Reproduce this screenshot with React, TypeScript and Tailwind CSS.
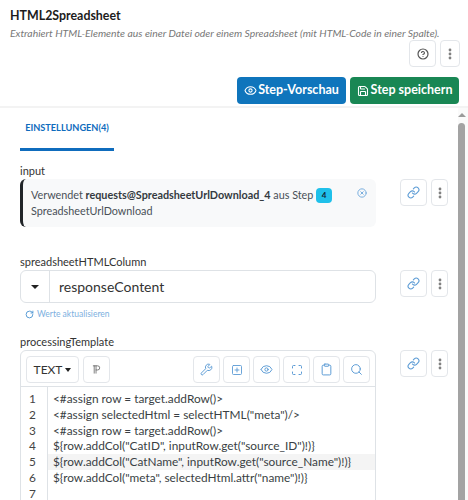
import React from "react";
import { Link, Wrench, Eye, Save, Search, Clipboard, Maximize, SquarePlus, CircleHelp, CircleX, RotateCw, Pilcrow } from "lucide-react";

const Kebab = () => (
  <svg width="4" height="12" viewBox="0 0 4 12" fill="#808080">
    <circle cx="2" cy="2" r="1.4" />
    <circle cx="2" cy="6" r="1.4" />
    <circle cx="2" cy="10" r="1.4" />
  </svg>
);

const Side = () => (
  <div className="flex gap-[4px] ml-[24px] shrink-0">
    <button className="w-[27px] h-[27px] border border-[#e3e6ea] rounded-[4px] flex items-center justify-center">
      <Link size={13} strokeWidth={2} className="text-[#5b9bd5]" />
    </button>
    <button className="w-[17px] h-[27px] border border-[#e3e6ea] rounded-[4px] flex items-center justify-center">
      <Kebab />
    </button>
  </div>
);

const Tool = ({ children }: { children: React.ReactNode }) => (
  <button className="w-[27px] h-[27px] border border-[#e3e6ea] rounded-[4px] flex items-center justify-center text-[#5b9bd5]">
    {children}
  </button>
);

const lines = [
  '<#assign row = target.addRow()>',
  '<#assign selectedHtml = selectHTML("meta")/>',
  '<#assign row = target.addRow()>',
  '${row.addCol("CatID", inputRow.get("source_ID")!)}',
  '${row.addCol("CatName", inputRow.get("source_Name")!)}',
  '${row.addCol("meta", selectedHtml.attr("name")!)}',
  '',
];

export default function App() {
  return (
    <div className="w-[468px] h-[500px] overflow-hidden bg-white flex flex-col text-[#212529] font-['Lato',sans-serif]">
      <header className="h-[108px] shrink-0 pl-[10px] pr-[8px] pt-[7px] border-b-2 border-[#f3f3f3]">
        <h1 className="text-[12.4px] leading-[17px] font-bold text-[#1c1c1c]">HTML2Spreadsheet</h1>
        <p className="text-[10.4px] leading-[14px] mt-[2px] italic text-[#777] whitespace-nowrap">
          Extrahiert HTML-Elemente aus einer Datei oder einem Spreadsheet (mit HTML-Code in einer Spalte).
        </p>
        <div className="flex justify-end gap-[4px]">
          <button className="w-[27px] h-[27px] border border-[#e3e6ea] rounded-[4px] flex items-center justify-center">
            <CircleHelp size={12} strokeWidth={2.4} className="text-[#555]" />
          </button>
          <button className="w-[20px] h-[27px] border border-[#e3e6ea] rounded-[4px] flex items-center justify-center">
            <Kebab />
          </button>
        </div>
        <div className="flex justify-end gap-[4px] mt-[10px] pr-[1px] text-[12.5px] font-bold text-white">
          <button className="w-[109px] h-[27px] rounded-[4px] bg-[#0f75bc] flex items-center justify-center gap-[1px] whitespace-nowrap">
            <Eye size={13} strokeWidth={2} />
            Step-Vorschau
          </button>
          <button className="w-[109px] h-[27px] rounded-[4px] bg-[#198754] flex items-center justify-center gap-[2px] whitespace-nowrap">
            <Save size={12} strokeWidth={2.2} />
            Step speichern
          </button>
        </div>
      </header>

      <div className="flex flex-1 min-h-0">
        <main className="flex-1 min-w-0 pl-[20px] overflow-hidden">
          <div className="w-[94px] h-[43px] border-b-[3px] border-[#0f6cbd] flex justify-center pt-[13px] text-[9.2px] leading-[14px] font-bold text-[#0f6cbd] whitespace-nowrap">
            EINSTELLUNGEN(4)
          </div>

          <div className="text-[11px] leading-[14px] mt-[13px] text-[#333]">input</div>
          <div className="flex mt-[1px]">
            <div className="w-[356px] h-[48px] bg-[#f8f9fa] rounded-[6px] border-l-[3px] border-[#212529] pl-[8px] pr-[8px] relative text-[10.8px] leading-[16px] pt-[8px] text-[#495057] shrink-0">
              <div className="whitespace-nowrap flex items-center">
                <span>Verwendet&nbsp;</span>
                <b className="font-bold text-[#343a40]">requests@SpreadsheetUrlDownload_4</b>
                <span>&nbsp;aus Step&nbsp;</span>
                <span className="w-[16px] h-[15px] rounded-[4px] bg-[#1fc0ea] text-[8px] font-bold text-[#123] flex items-center justify-center">4</span>
              </div>
              <div>SpreadsheetUrlDownload</div>
              <CircleX size={10} strokeWidth={2.2} className="absolute right-[9px] top-[9px] text-[#6ea8dc]" />
            </div>
            <Side />
          </div>

          <div className="text-[11px] leading-[14px] mt-[28px] text-[#333]">spreadsheetHTMLColumn</div>
          <div className="flex mt-[1px]">
            <div className="w-[356px] h-[33px] border border-[#dee2e6] rounded-[6px] flex shrink-0">
              <div className="w-[29px] border-r border-[#dee2e6] flex items-center justify-center">
                <span className="border-x-[4px] border-x-transparent border-t-[4px] border-t-[#222]" />
              </div>
              <div className="pl-[9px] text-[14px] leading-[31px] text-[#333]">responseContent</div>
            </div>
            <Side />
          </div>
          <div className="flex items-center gap-[3px] ml-[5px] mt-[4px] h-[14px] text-[#7db0e0] text-[8.5px]">
            <RotateCw size={9} strokeWidth={2.4} className="text-[#4b93d1]" />
            Werte aktualisieren
          </div>

          <div className="text-[11px] leading-[14px] mt-[14px] text-[#333]">processingTemplate</div>
          <div className="flex mt-[1px]">
            <div className="w-[356px] h-[200px] border border-[#dee2e6] rounded-t-[6px] shrink-0">
              <div className="h-[36px] border-b border-[#dee2e6] pl-[5px] pr-[5px] pt-[5px] flex">
                <button className="w-[53px] h-[27px] border border-[#e3e6ea] rounded-[4px] flex items-center justify-center gap-[3px] text-[12px] text-[#333]">
                  TEXT
                  <span className="border-x-[3.5px] border-x-transparent border-t-[4px] border-t-[#222]" />
                </button>
                <button className="w-[27px] h-[27px] ml-[4px] border border-[#e3e6ea] rounded-[4px] flex items-center justify-center text-[#555]">
                  <Pilcrow size={11} strokeWidth={1.6} className="-scale-x-100" />
                </button>
                <div className="flex gap-[3px] ml-auto">
                  <Tool><Wrench size={13} strokeWidth={1.8} /></Tool>
                  <Tool><SquarePlus size={12} strokeWidth={1.8} /></Tool>
                  <Tool><Eye size={13} strokeWidth={1.8} /></Tool>
                  <Tool><Maximize size={12} strokeWidth={2} /></Tool>
                  <Tool><Clipboard size={13} strokeWidth={1.8} /></Tool>
                  <Tool><Search size={13} strokeWidth={1.8} /></Tool>
                </div>
              </div>
              <div className="flex h-[163px] text-[11.85px] leading-[15.8px] text-[#3a3f44]">
                <div className="w-[27px] shrink-0 border-r border-[#dee2e6] text-center pr-[3px] pt-[4px] text-[#444]">
                  {lines.map((_, i) => (
                    <div key={i}>{i + 1}</div>
                  ))}
                </div>
                <div className="flex-1 min-w-0 pt-[4px]">
                  {lines.map((l, i) => (
                    <div key={i} className={`pl-[5px] h-[15.8px] whitespace-nowrap ${i === 4 ? "bg-[#f4f4f4]" : ""}`}>
                      {l}
                    </div>
                  ))}
                </div>
              </div>
            </div>
            <Side />
          </div>
        </main>
        <aside className="w-[10px] shrink-0 flex flex-col items-center bg-[#fafafa] pr-[3px] pt-[5px]">
          <span className="border-x-[4px] border-x-transparent border-b-[4px] border-b-[#9a9a9a]" />
          <div className="mt-[6px] w-[7px] flex-1 rounded-t-[4px] bg-[#a3a3a3]" />
        </aside>
      </div>
    </div>
  );
}
